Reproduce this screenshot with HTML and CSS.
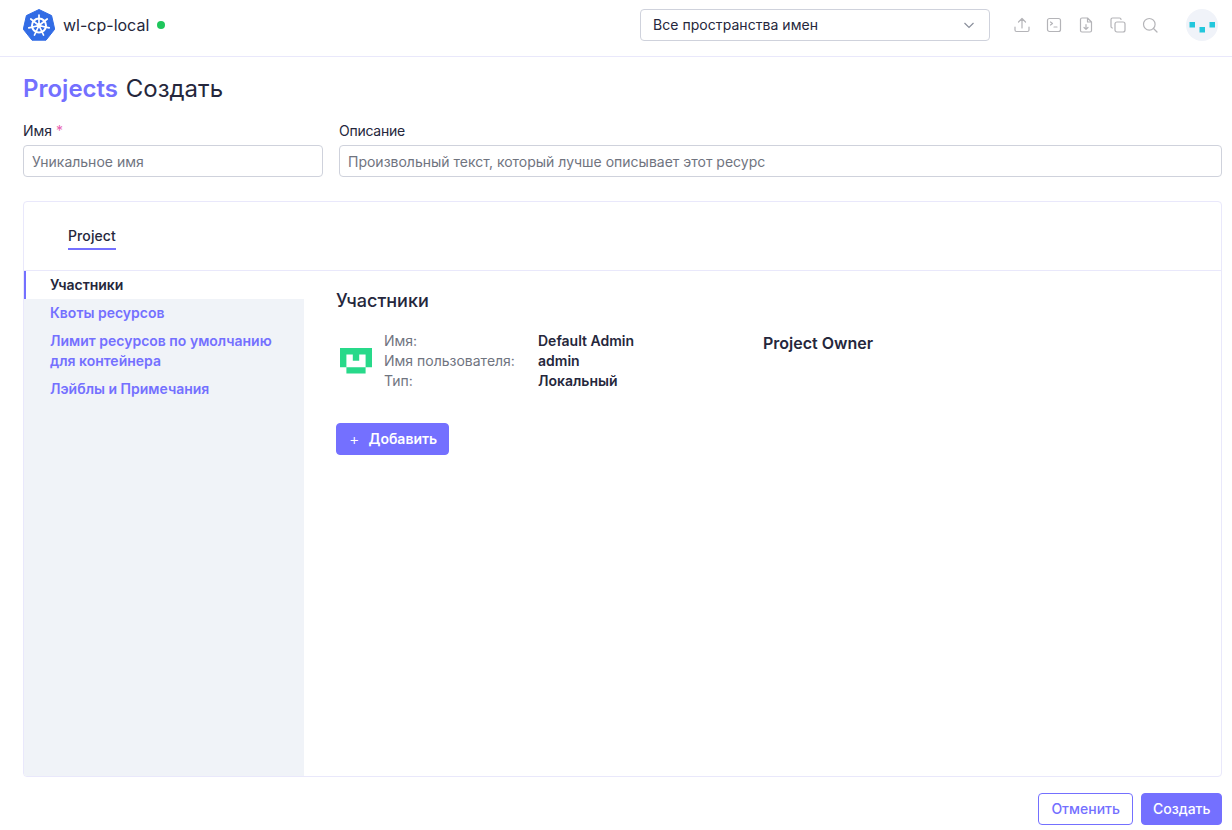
FILE: index.html
```html
<!DOCTYPE html>
<html lang="ru">
<head>
<meta charset="utf-8">
<title>Projects</title>
<link rel="stylesheet" href="styles.css">
</head>
<body>
<header class="topbar">
  <div class="brand">
    <svg class="logo" viewBox="0 0 32 32" width="32" height="32">
      <path d="M16 .5 28.600 6.600 31.700 20.200 23 31.200H9L.3 20.200 3.400 6.600Z" fill="#326ce5" stroke="#326ce5" stroke-linejoin="round"/>
      <g fill="none" stroke="#fff">
        <circle cx="16" cy="16.500" r="7" stroke-width="2"/>
        <path stroke-width="1.700" stroke-linecap="round" d="M16 16.500V6M16 16.500 24.200 10M16 16.500 26.200 18.800M16 16.500 20.500 26M16 16.500 11.500 26M16 16.500 5.800 18.800M16 16.500 7.800 10"/>
      </g>
      <circle cx="16" cy="16.500" r="2.200" fill="#fff"/>
    </svg>
    <span class="cluster">wl-cp-local</span>
    <span class="dot"></span>
  </div>
  <div class="ns">
    <span class="ns-label">Все пространства имен</span>
    <svg viewBox="0 0 12 12" width="12" height="12"><path d="M1.500 4 6 8.500 10.500 4" fill="none" stroke="#8a8f9c" stroke-width="1.200"/></svg>
  </div>
  <div class="tools">
    <svg viewBox="0 0 16 16" width="16" height="16"><path d="M1 10v3a1.500 1.500 0 0 0 1.500 1.500h11A1.500 1.500 0 0 0 15 13v-3M8 11V2M4.500 5 8 1.500 11.500 5"/></svg>
    <svg viewBox="0 0 16 16" width="16" height="16"><rect x="1.500" y="1.500" width="13" height="13" rx="2"/><path d="m4.500 5 2 1.500-2 1.500M8 10h3"/></svg>
    <svg viewBox="0 0 16 16" width="16" height="16"><path d="M9.500 1H4a1.500 1.500 0 0 0-1.500 1.500v11A1.500 1.500 0 0 0 4 15h8a1.500 1.500 0 0 0 1.500-1.500V5ZM9.500 1v4h4M8 7.500v4.500M6 10.500l2 1.800 2-1.800"/></svg>
    <svg viewBox="0 0 16 16" width="16" height="16"><rect x="5" y="5" width="10" height="10" rx="2"/><path d="M11 2.500A1.500 1.500 0 0 0 9.500 1H2.500A1.500 1.500 0 0 0 1 2.500v7A1.500 1.500 0 0 0 2.500 11"/></svg>
    <svg viewBox="0 0 16 16" width="16" height="16"><circle cx="7.300" cy="7.300" r="5.800"/><path d="m11.500 11.500 3.500 3.500"/></svg>
  </div>
  <div class="avatar">
    <svg viewBox="0 0 32 32" width="32" height="32"><g fill="#22c7dc"><rect x="3.500" y="13" width="5.500" height="5.500"/><rect x="13.500" y="18" width="5.500" height="5.500"/><rect x="23.500" y="13" width="5.500" height="5.500"/></g></svg>
  </div>
</header>

<main class="page">
  <h1 class="title"><span class="crumb">Projects</span> <span>Создать</span></h1>

  <div class="fields">
    <label class="field name">
      <span class="label">Имя <em>*</em></span>
      <input class="input" placeholder="Уникальное имя">
    </label>
    <label class="field desc">
      <span class="label tight">Описание</span>
      <input class="input" placeholder="Произвольный текст, который лучше описывает этот ресурс">
    </label>
  </div>

  <section class="card">
    <div class="tabs"><span class="tab">Project</span></div>
    <div class="body">
      <nav class="side">
        <a class="side-item active">Участники</a>
        <a class="side-item">Квоты ресурсов</a>
        <a class="side-item">Лимит ресурсов по умолчанию для контейнера</a>
        <a class="side-item">Лэйблы и Примечания</a>
      </nav>
      <div class="content">
        <h2 class="heading">Участники</h2>
        <div class="member">
          <svg class="identicon" viewBox="0 0 5 4" width="32" height="25.600">
            <path fill="#28d98a" d="M0 0H5V3H4V1H3V2H2V1H1V3H0ZM1 3H4V4H1Z"/>
          </svg>
          <dl class="info">
            <dt>Имя:</dt><dd>Default Admin</dd>
            <dt>Имя пользователя:</dt><dd>admin</dd>
            <dt>Тип:</dt><dd>Локальный</dd>
          </dl>
          <div class="role">Project Owner</div>
        </div>
        <button class="btn primary add" type="button"><span class="plus">+</span>Добавить</button>
      </div>
    </div>
  </section>

  <div class="actions">
    <button class="btn outline" type="button">Отменить</button>
    <button class="btn primary" type="button">Создать</button>
  </div>
</main>
</body>
</html>
```
FILE: styles.css
```css
* { box-sizing: border-box; }
html, body { margin: 0; height: 100%; }
body {
  background: #fff;
  color: #25273c;
  font-family: Inter, "Liberation Sans", sans-serif;
  font-size: 14px;
  line-height: 20px;
  overflow: hidden;
}
.topbar {
  height: 57px;
  border-bottom: 1px solid #e9e8fb;
  display: flex;
  align-items: center;
  padding: 0 14px 0 23px;
}
.brand { display: flex; align-items: center; flex: 1; margin-top: -7px; }
.logo { display: block; }
.cluster { font-size: 16px; margin-left: 8px; }
.dot { width: 8px; height: 8px; border-radius: 50%; background: #1fc65c; margin-left: 8px; }
.ns {
  width: 350px;
  height: 32px;
  margin-top: -7px;
  border: 1px solid #cfd2dc;
  border-radius: 4px;
  display: flex;
  align-items: center;
  justify-content: space-between;
  padding: 0 14px 0 12px;
}
.ns-label { letter-spacing: 0.05px; }
.tools { display: flex; gap: 16px; margin-left: 24px; margin-top: -7px; }
.tools svg { display: block; fill: none; stroke: #b4b4b8; stroke-width: 1.2; stroke-linecap: round; stroke-linejoin: round; }
.avatar {
  width: 32px;
  height: 32px;
  border-radius: 50%;
  background: #f0f3f9;
  margin-left: 28px;
  margin-top: -7px;
}
.avatar svg { display: block; }
.page { padding: 0 10px 0 23px; }
.title {
  margin: 16px 0 0;
  font-size: 24px;
  line-height: 32px;
  font-weight: 400;
  height: 32px;
}
.crumb { color: #7470ff; font-weight: 600; margin-right: 1px; }
.fields { display: flex; gap: 16px; margin-top: 16px; }
.field { display: flex; flex-direction: column; }
.name { width: 300px; }
.desc { flex: 1; }
.label { height: 20px; margin-bottom: 4px; line-height: 20px; }
.label em { color: #e85fb0; font-style: normal; }
.tight { letter-spacing: -0.25px; }
.input {
  height: 32px;
  border: 1px solid #cfd2dc;
  border-radius: 4px;
  padding: 0 8px;
  font: inherit;
  color: #25273c;
  outline: none;
}
.input::placeholder { color: #70747f; opacity: 1; }
.card {
  margin-top: 24px;
  height: 576px;
  border: 1px solid #e9e8fb;
  border-radius: 4px;
  display: flex;
  flex-direction: column;
  overflow: hidden;
}
.tabs { height: 69px; border-bottom: 1px solid #e9e8fb; padding: 24px 0 0 44px; flex: none; }
.tab {
  display: inline-block;
  font-weight: 500;
  height: 24px;
  border-bottom: 2px solid #7470ff;
  letter-spacing: 0.1px;
}
.body { flex: 1; display: flex; min-height: 0; }
.side { width: 280px; background: #f0f3f8; display: flex; flex-direction: column; }
.side-item {
  display: block;
  padding: 4px 24px 4px 26px;
  color: #7470ff;
  font-weight: 600;
}
.side-item.active {
  background: #fff;
  color: #25273c;
  border-left: 2px solid #7470ff;
  padding-left: 24px;
}
.content { flex: 1; padding: 20px 32px; }
.heading { margin: 0; font-size: 18px; line-height: 20px; font-weight: 500; }
.member { display: flex; align-items: center; margin-top: 20px; }
.identicon { display: block; margin: 0 12px 0 4px; }
.info {
  margin: 0;
  display: grid;
  grid-template-columns: 154px 225px;
  line-height: 20px;
}
.info dt { color: #70747f; }
.info dd { margin: 0; font-weight: 600; }
.role { font-size: 16px; font-weight: 600; align-self: flex-start; margin-top: 2px; }
.btn {
  height: 32px;
  border-radius: 4px;
  font: inherit;
  font-weight: 600;
  padding: 0 11px;
  cursor: pointer;
}
.primary { background: #7470ff; color: #fff; border: 1px solid #7470ff; }
.outline { background: #fff; color: #7470ff; border: 1px solid #7470ff; font-weight: 500; padding: 0 12.500px; }
.add { display: flex; align-items: center; margin-top: 32px; padding: 0 11px 0 12px; }
.plus { font-weight: 300; font-size: 16px; margin-right: 9px; }
.actions { display: flex; justify-content: flex-end; gap: 8px; margin-top: 16px; }
.actions .primary { font-weight: 500; padding: 0 10.500px; }
```
